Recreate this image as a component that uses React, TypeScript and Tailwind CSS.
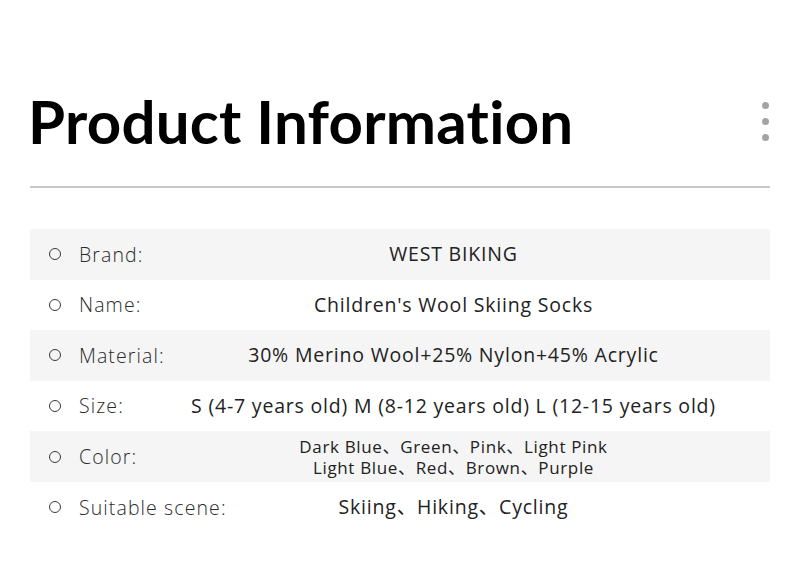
type Row = {
  label: string;
  value: string[];
  shaded?: boolean;
};

const rows: Row[] = [
  { label: "Brand:", value: ["WEST BIKING"], shaded: true },
  { label: "Name:", value: ["Children's Wool Skiing Socks"] },
  { label: "Material:", value: ["30% Merino Wool+25% Nylon+45% Acrylic"], shaded: true },
  { label: "Size:", value: ["S (4-7 years old) M (8-12 years old) L (12-15 years old)"] },
  {
    label: "Color:",
    value: ["Dark Blue、Green、Pink、Light Pink", "Light Blue、Red、Brown、Purple"],
    shaded: true,
  },
  { label: "Suitable scene:", value: ["Skiing、Hiking、Cycling"] },
];

export default function App() {
  return (
    <div className="h-[580px] w-[800px] bg-white text-[#1f1f1f]">
      <header className="flex items-start justify-between pl-[28px] pr-[31px] pt-[85px]">
        <h1
          className="text-[60px] font-bold leading-[72px] tracking-[0.25px] text-black [font-variant-ligatures:none]"
          style={{ fontFamily: "Lato, sans-serif" }}
        >
          Product Information
        </h1>
        <div className="mt-[17px] flex flex-col gap-[9px]">
          <span className="h-[7px] w-[7px] rounded-full bg-[#a3a3a3]" />
          <span className="h-[7px] w-[7px] rounded-full bg-[#a3a3a3]" />
          <span className="h-[7px] w-[7px] rounded-full bg-[#a3a3a3]" />
        </div>
      </header>

      <div className="mx-[30px] mt-[29px] h-[2px] bg-[#c8c8c8]" />

      <div
        className="mx-[30px] mt-[41px] flex flex-col"
        style={{ fontFamily: "'Open Sans', 'Noto Sans CJK SC', sans-serif" }}
      >
        {rows.map((row) => (
          <div
            key={row.label}
            className={`grid h-[50.6px] grid-cols-[107px_1fr] items-center ${
              row.shaded ? "bg-[#f5f5f5]" : ""
            }`}
          >
            <div className="flex items-center whitespace-nowrap pl-[19px]">
              <span className="h-[12px] w-[12px] shrink-0 rounded-full border-[1.5px] border-[#3a3a3a]" />
              <span className="ml-[18px] text-[19.5px] font-light tracking-[1.1px] text-[#2a2a2a]">
                {row.label}
              </span>
            </div>
            <div className="flex flex-col items-center">
              {row.value.map((line) => (
                <span
                  key={line}
                  className={
                    row.value.length > 1
                      ? "text-[17px] leading-[21px] tracking-[0.65px] text-[#222]"
                      : "text-[19.5px] leading-[26px] tracking-[0.8px] text-[#222]"
                  }
                >
                  {line}
                </span>
              ))}
            </div>
          </div>
        ))}
      </div>
    </div>
  );
}
